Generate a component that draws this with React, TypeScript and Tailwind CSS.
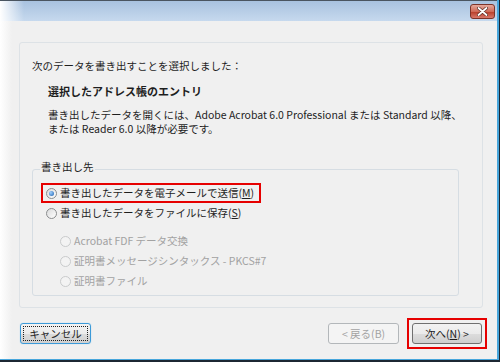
import React from 'react';

const FONT = '"Noto Sans CJK JP", "Noto Sans", sans-serif';

type RadioProps = { checked?: boolean; disabled?: boolean };

function Radio({ checked, disabled }: RadioProps) {
    return (
        <span
            className={`w-[11px] h-[11px] shrink-0 rounded-full border flex items-center justify-center ${
                disabled
                    ? 'border-[#c9cbcc] bg-[#f3f3f3]'
                    : 'border-[#8a8c8e] bg-[linear-gradient(135deg,#d9dadb,#ffffff)]'
            }`}
        >
            {checked && (
                <span className="w-[5px] h-[5px] rounded-full bg-[radial-gradient(circle_at_35%_35%,#9fd0ff,#1b5fae)]" />
            )}
        </span>
    );
}

function Option({ label, checked, disabled, highlight }: { label: React.ReactNode; checked?: boolean; disabled?: boolean; highlight?: boolean }) {
    return (
        <div
            className={`flex items-center h-[20px] w-fit pl-[3px] pr-[5px] border-2 ${
                highlight ? 'border-[#e60000]' : 'border-transparent'
            } ${disabled ? 'text-[#a2a2a2]' : 'text-[#1e1e1e]'}`}
        >
            <Radio checked={checked} disabled={disabled} />
            <span className="ml-[3px] whitespace-nowrap">{label}</span>
        </div>
    );
}

export default function App() {
    return (
        <div
            className="w-[500px] h-[362px] overflow-hidden border-r border-b-2 border-[#1c2733] text-[10.5px] leading-[14px] text-[#1e1e1e]"
            style={{ fontFamily: FONT }}
        >
            <div className="h-full flex flex-col border-r-2 border-b border-[#47a6dc] bg-[linear-gradient(to_right,#ffffff,#f0f0f0_12px)]">
                {/* Title bar */}
                <div className="h-[21px] shrink-0 flex justify-end items-start pt-[3px] pr-[2px] border-t border-[#4a5560] bg-[linear-gradient(to_right,#ffffff,rgba(255,255,255,0)_24px),linear-gradient(to_bottom,#a8c2df,#c6d9ee)]">
                    <div className="w-[25px] h-[15px] rounded-[3px] border border-[#7c3329] bg-[linear-gradient(to_bottom,#e6a99c,#cf6a58_50%,#b9402d_55%,#d9786a)] flex items-center justify-center">
                        <svg width="11" height="9" viewBox="0 0 11 9">
                            <path d="M1.5 1 L9.5 8 M9.5 1 L1.5 8" stroke="#5b2a22" strokeWidth="3.2" strokeLinecap="round" />
                            <path d="M1.5 1 L9.5 8 M9.5 1 L1.5 8" stroke="#ffffff" strokeWidth="1.8" strokeLinecap="round" />
                        </svg>
                    </div>
                </div>

                {/* Main panel */}
                <div className="mt-[21px] ml-[19px] w-[464px] h-[266px] shrink-0 border border-[#dde2e6] rounded-[3px] pl-[12px] pt-[16px]">
                    <p>次のデータを書き出すことを選択しました：</p>
                    <p className="mt-[11px] ml-[16px] font-bold text-[11px]">選択したアドレス帳のエントリ</p>
                    <p className="mt-[10px] ml-[16px]">
                        書き出したデータを開くには、Adobe Acrobat 6.0 Professional または Standard 以降、
                        <br />
                        または Reader 6.0 以降が必要です。
                    </p>

                    <fieldset className="mt-[24px] w-[427px] h-[136px] border border-[#d6dde3] rounded-[3px] pl-[8px] pt-[5px]">
                        <legend className="ml-[-1px] px-[1px] pb-[4px] text-[#1e1e1e]">書き出し先</legend>
                        <Option
                            highlight
                            checked
                            label={
                                <>
                                    書き出したデータを電子メールで送信(<span className="underline">M</span>)
                                </>
                            }
                        />
                        <Option
                            label={
                                <>
                                    書き出したデータをファイルに保存(<span className="underline">S</span>)
                                </>
                            }
                        />
                        <div className="ml-[14px] mt-[8px]">
                            <Option disabled label="Acrobat FDF データ交換" />
                            <Option disabled label="証明書メッセージシンタックス - PKCS#7" />
                            <Option disabled label="証明書ファイル" />
                        </div>
                    </fieldset>
                </div>

                {/* Buttons */}
                <div className="mt-[10px] flex items-center pl-[20px] pr-[10px]">
                    <button className="w-[71px] h-[21px] rounded-[3px] border border-[#3c9ad8] p-[2px] bg-[linear-gradient(to_bottom,#f3f3f3,#ebebeb_50%,#dcdcdc_51%,#d0d0d0)] shadow-[0_0_1px_#7ec4ee]">
                        <span className="h-full flex items-center justify-center border border-dotted border-[#202020] text-[#1e1e1e]">
                            キャンセル
                        </span>
                    </button>
                    <div className="flex-1" />
                    <button className="w-[71px] h-[21px] rounded-[3px] border border-[#b3b7ba] bg-[#f4f4f4] text-[#a3a3a3] flex items-center justify-center mr-[8px]">
                        &lt; 戻る(B)
                    </button>
                    <div className="border-2 border-[#e60000] p-[3px]">
                        <button className="w-[70px] h-[21px] rounded-[3px] border border-[#707070] bg-[linear-gradient(to_bottom,#f2f2f2,#ebebeb_50%,#dddddd_51%,#cfcfcf)] flex items-center justify-center text-[#1e1e1e]">
                            次へ(<span className="underline">N</span>) &gt;
                        </button>
                    </div>
                </div>
            </div>
        </div>
    );
}
